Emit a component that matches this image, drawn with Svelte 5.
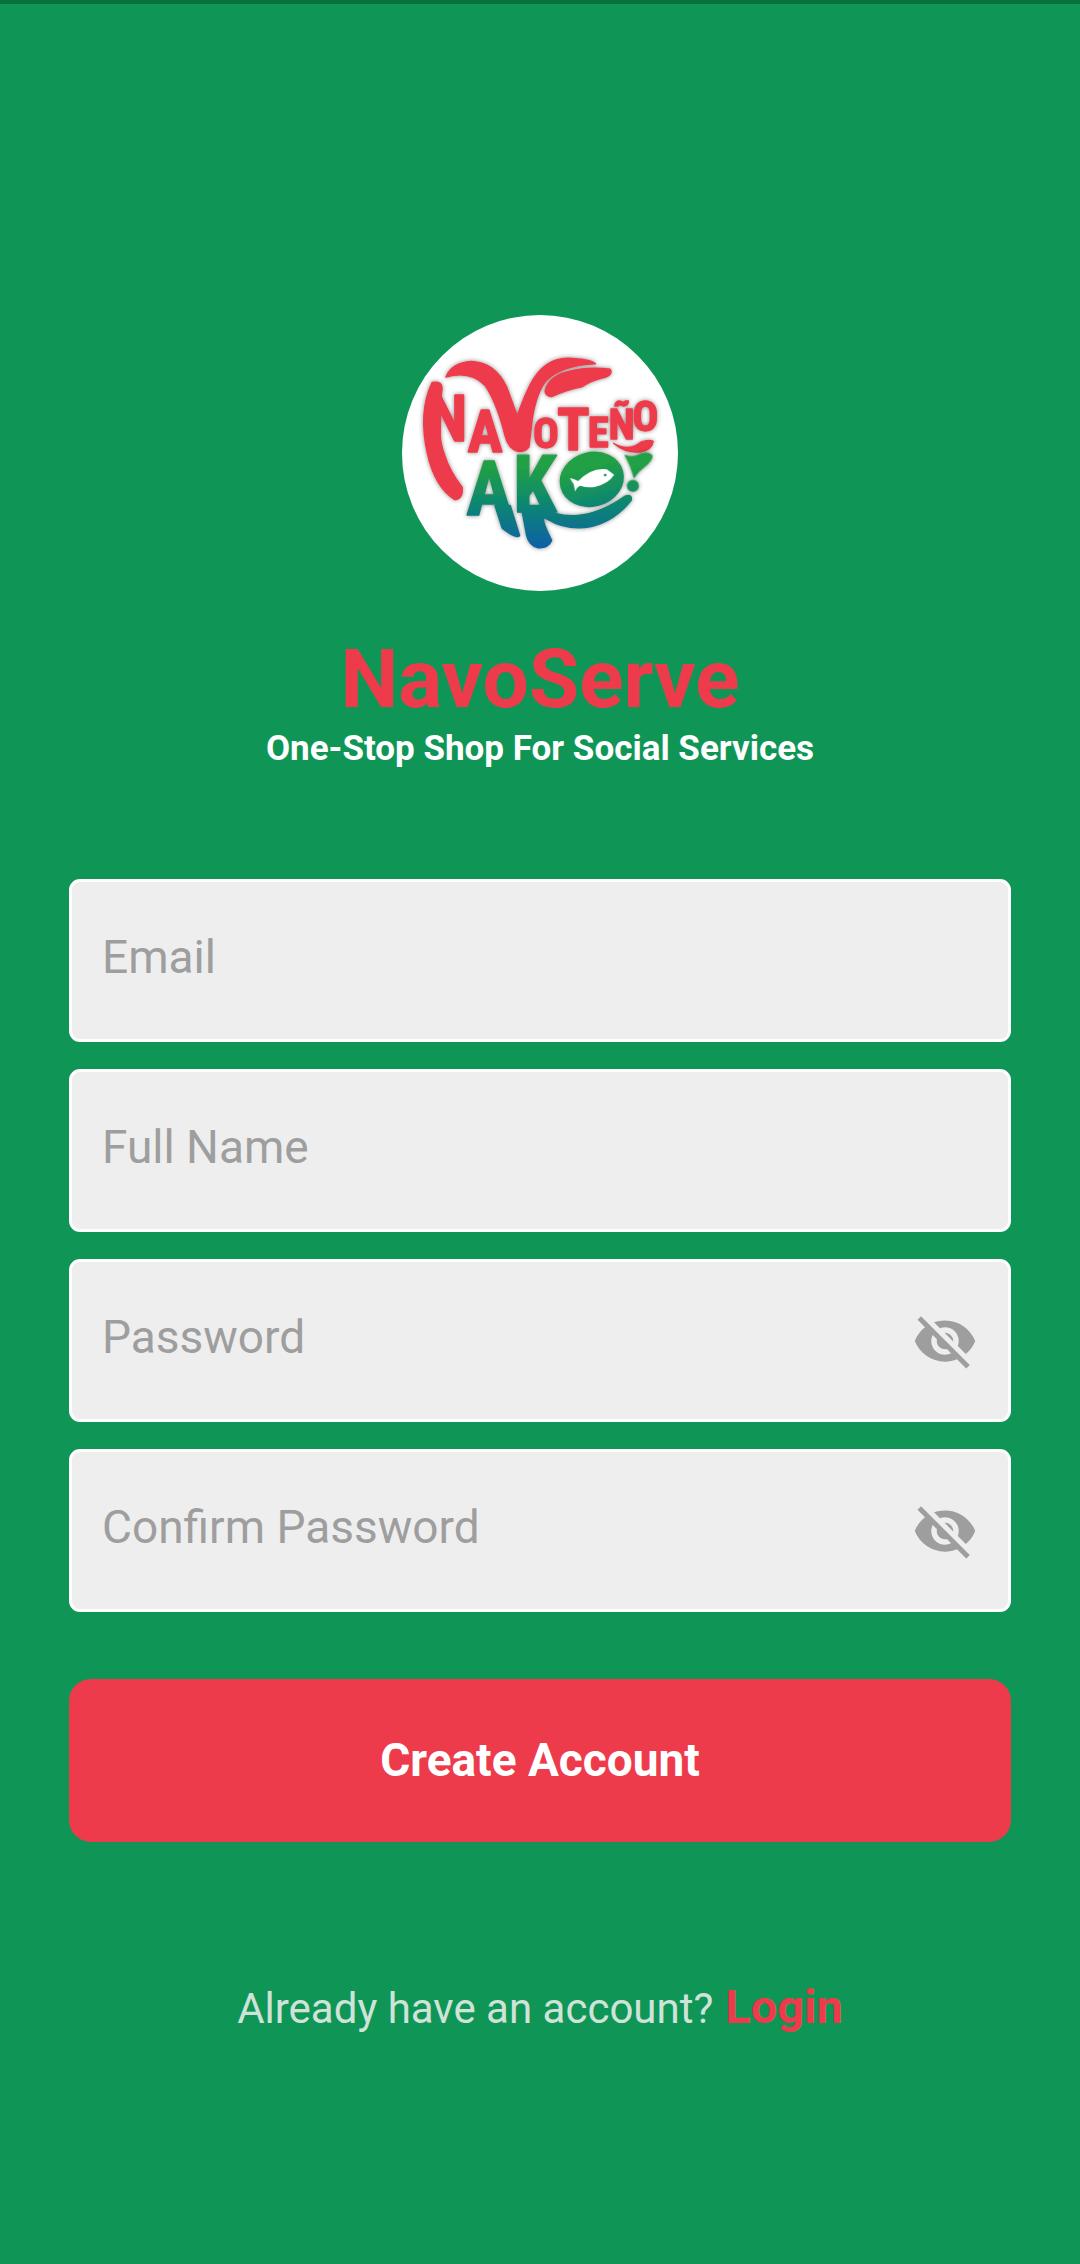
<script>
  let email = $state('');
  let fullName = $state('');
  let password = $state('');
  let confirmation = $state('');
  let showPassword = $state(false);
  let showConfirmation = $state(false);
</script>

{#snippet eyeOff()}
  <svg viewBox="0 0 24 24" aria-hidden="true">
    <path d="M12 7c2.76 0 5 2.24 5 5 0 .65-.13 1.26-.36 1.83l2.92 2.92c1.51-1.26 2.7-2.89 3.43-4.75-1.73-4.39-6-7.5-11-7.5-1.4 0-2.74.25-3.98.7l2.16 2.16C10.74 7.13 11.35 7 12 7zM2 4.27l2.28 2.28.46.46C3.08 8.3 1.78 10.02 1 12c1.73 4.39 6 7.5 11 7.5 1.55 0 3.03-.3 4.38-.84l.42.42L19.73 22 21 20.73 3.27 3 2 4.27zM7.53 9.8l1.55 1.55c-.05.21-.08.43-.08.65 0 1.66 1.34 3 3 3 .22 0 .44-.03.65-.08l1.55 1.55c-.67.33-1.41.53-2.2.53-2.76 0-5-2.24-5-5 0-.79.2-1.53.53-2.2zm4.31-.78l3.15 3.15.02-.16c0-1.66-1.34-3-3-3l-.17.01z" />
  </svg>
{/snippet}

<main>
  <header>
    <svg class="logo" viewBox="22 30 826 826" role="img" aria-label="Navoteño Ako!">
      <defs>
        <linearGradient id="sea" gradientUnits="userSpaceOnUse" x1="0" y1="440" x2="0" y2="725">
          <stop offset="0.15" stop-color="#21a045" />
          <stop offset="0.5" stop-color="#0f8a6b" />
          <stop offset="1" stop-color="#0760a6" />
        </linearGradient>
        <filter id="shade" x="-10%" y="-10%" width="120%" height="120%">
          <feDropShadow dx="0" dy="0" stdDeviation="6" flood-color="#333" flood-opacity="0.6" />
        </filter>
      </defs>
      <circle cx="435" cy="443" r="413" fill="#fff" />
      <g class="red" filter="url(#shade)">
        <path d="M112 232Q142 226 142 252Q122 380 150 450Q166 500 202 545Q206 580 180 583Q120 545 98 445Q70 320 112 232Z" />
        <path d="M153 216Q172 172 230 169Q300 172 335 245Q350 285 367 332Q385 280 405 240Q450 150 535 160Q590 164 601 176Q500 180 455 225Q425 260 412 340L402 425Q390 440 368 438Q340 430 330 390Q305 290 270 240Q225 195 153 216Z" />
        <path d="M450 260Q455 225 500 205Q570 182 645 192Q655 205 632 216Q590 225 560 245Q520 252 470 274Q455 275 450 260Z" />
        <path d="M655 414Q700 440 738 410Q760 402 774 408Q768 436 735 440Q690 444 655 414Z" />
        <text x="100" y="408" font-size="192">N</text>
        <text x="218" y="440" font-size="176">A</text>
        <text x="414" y="428" font-size="128">O</text>
        <text x="486" y="434" font-size="180">T</text>
        <text x="578" y="424" font-size="128">E</text>
        <text x="640" y="402" font-size="128">Ñ</text>
        <text x="712" y="376" font-size="128">O</text>
      </g>
      <g class="sea" filter="url(#shade)">
        <path d="M300 600L346 600L374 690Q366 702 322 668Z" />
        <text x="214" y="628" font-size="230">A</text>
        <text x="354" y="620" font-size="236">K</text>
        <path d="M435 600C490 640 580 650 690 572Q712 565 708 585C640 670 540 690 455 640Q430 625 470 705Q460 728 430 727Q402 720 395 690L378 600Z" />
        <ellipse cx="590" cy="522" rx="95" ry="80" transform="rotate(-15 590 522)" />
        <path d="M690 450Q712 460 735 447Q760 438 770 452Q768 468 745 485Q725 500 717 516Q708 480 690 450Z" />
        <circle cx="713" cy="541" r="16" />
      </g>
      <path d="M524 518Q535 520 549 527Q590 485 635 492L657 508Q640 535 598 545Q575 548 556 541Q545 545 540 558L536 537Z" fill="#fff" />
      <circle cx="630" cy="509" r="4" fill="#0f8a5b" />
    </svg>
    <h1>NavoServe</h1>
    <p>One-Stop Shop For Social Services</p>
  </header>

  <form onsubmit={(event) => event.preventDefault()}>
    <div class="field">
      <input type="email" aria-label="Email" placeholder="Email" bind:value={email} />
    </div>
    <div class="field">
      <input type="text" aria-label="Full Name" placeholder="Full Name" bind:value={fullName} />
    </div>
    <div class="field">
      <input type={showPassword ? 'text' : 'password'} aria-label="Password" placeholder="Password" bind:value={password} />
      <button type="button" class="eye" aria-label="Show password" onclick={() => (showPassword = !showPassword)}>
        {@render eyeOff()}
      </button>
    </div>
    <div class="field">
      <input type={showConfirmation ? 'text' : 'password'} aria-label="Confirm Password" placeholder="Confirm Password" bind:value={confirmation} />
      <button type="button" class="eye" aria-label="Show confirmed password" onclick={() => (showConfirmation = !showConfirmation)}>
        {@render eyeOff()}
      </button>
    </div>
    <button type="submit" class="submit">Create Account</button>
  </form>

  <footer>
    <span>Already have an account?</span>
    <a href="#login">Login</a>
  </footer>
</main>

<style>
  :global(body) {
    background: #0f9657;
  }

  main {
    box-sizing: border-box;
    min-height: 100vh;
    padding: 311px 69px 80px;
    border-top: 4px solid #08723f;
    background: #0f9657;
    font-family: Roboto, sans-serif;
  }

  header {
    display: flex;
    flex-direction: column;
    align-items: center;
    text-align: center;
  }

  .logo {
    width: 276px;
    height: 276px;
  }

  .logo text {
    font-family: "Roboto Condensed", "Liberation Sans Narrow", Roboto, sans-serif;
    font-weight: 700;
  }

  .red {
    fill: #ee3b4b;
    stroke: #ee3b4b;
    stroke-width: 4;
    stroke-linejoin: round;
  }

  .sea {
    fill: url(#sea);
    stroke: url(#sea);
    stroke-width: 4;
    stroke-linejoin: round;
  }

  h1 {
    margin: 40px 0 0;
    color: #ee3b4b;
    font-size: 82px;
    font-weight: 700;
    line-height: 96px;
  }

  header p {
    margin: 0;
    color: #fff;
    font-size: 35px;
    font-weight: 700;
    line-height: 44px;
  }

  form {
    display: flex;
    flex-direction: column;
    gap: 27px;
    margin-top: 108px;
  }

  .field {
    display: flex;
    align-items: center;
    box-sizing: border-box;
    height: 163px;
    padding: 0 30px;
    border: 3px solid #fff;
    border-radius: 11px;
    background: #eee;
  }

  input {
    flex: 1;
    min-width: 0;
    height: 100%;
    box-sizing: border-box;
    padding: 0 0 8px;
    border: 0;
    outline: 0;
    background: none;
    color: #333;
    font: 400 46px Roboto, sans-serif;
  }

  input::placeholder {
    color: #9e9e9e;
    opacity: 1;
  }

  .eye {
    display: flex;
    padding: 0;
    border: 0;
    background: none;
    cursor: pointer;
  }

  .eye svg {
    width: 66px;
    height: 66px;
    fill: #9e9e9e;
  }

  .submit {
    height: 163px;
    margin-top: 40px;
    padding-bottom: 3px;
    border: 0;
    border-radius: 22px;
    background: #ee3b4b;
    color: #fff;
    font: 700 46px Roboto, sans-serif;
    cursor: pointer;
  }

  footer {
    display: flex;
    align-items: baseline;
    justify-content: center;
    gap: 12px;
    margin-top: 138px;
    line-height: 54px;
  }

  footer span {
    color: #cfe3d8;
    font-size: 42px;
  }

  footer a {
    color: #ee3b4b;
    font-size: 47px;
    font-weight: 700;
    text-decoration: none;
  }
</style>
